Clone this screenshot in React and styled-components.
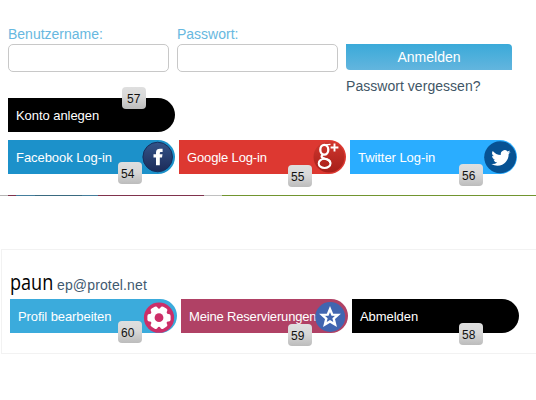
import React from "react";
import styled, { createGlobalStyle } from "styled-components";

const Global = createGlobalStyle`
  * { box-sizing: border-box; }
  body { margin: 0; background: #fff; font-family: "Liberation Sans", Arial, sans-serif; overflow: hidden; }
`;

const Page = styled.main`
  width: 536px;
  height: 400px;
  padding-top: 25px;
`;
const LoginForm = styled.form`
  display: flex;
  gap: 8px;
  height: 73px;
  padding-left: 8px;
`;
const Field = styled.label`
  display: flex;
  flex-direction: column;
  gap: 1px;
  width: 161px;
  font-size: 14px;
  line-height: 18px;
  color: #67b8e0;
`;
const Input = styled.input`
  width: 161px;
  height: 28px;
  border: 1px solid #c8c8c8;
  border-radius: 5px;
  background: #fff;
  outline: none;
`;
const Actions = styled.div`
  width: 166px;
  padding-top: 19px;
`;
const Submit = styled.button`
  display: block;
  width: 166px;
  height: 26px;
  padding: 0;
  border: 0;
  border-radius: 0 4px 0 4px;
  background: linear-gradient(#3aaad9, #63b5de);
  color: #fff;
  font: 14px/26px "Liberation Sans", Arial, sans-serif;
`;
const Forgot = styled.a`
  display: block;
  padding-top: 7px;
  font-size: 14px;
  line-height: 18px;
  letter-spacing: 0.04px;
  color: #3f5666;
  white-space: nowrap;
`;
const Row = styled.div`
  display: flex;
  gap: 4px;
  padding-left: 8px;
  margin-bottom: ${(p) => p.$after || 0}px;
`;
const Pill = styled.div`
  position: relative;
  display: flex;
  align-items: center;
  width: 167px;
  height: 34px;
  padding-left: 8px;
  border-radius: 0 17px 17px 0;
  background: ${(p) => p.$color};
  color: #fff;
  font-size: 13px;
  white-space: nowrap;
`;
const PillText = styled.span`
  letter-spacing: ${(p) => p.$spacing ?? -0.06}px;
`;
const Badge = styled.span`
  position: absolute;
  z-index: 1;
  left: ${(p) => p.$x}px;
  top: ${(p) => p.$y}px;
  width: 24px;
  height: 22px;
  padding-left: ${(p) => p.$inset || 3}px;
  border-radius: 4px;
  background: linear-gradient(#dfdfdf, #d8d8d8 45%, #bcbcbc);
  color: #111;
  font-size: 12px;
  line-height: 24px;
`;
const PillIcon = styled.svg`
  position: absolute;
  left: ${(p) => p.$x}px;
  top: ${(p) => p.$y}px;
  width: 34px;
  height: 34px;
`;
const Divider = styled.div`
  display: flex;
  height: 1px;
  margin-bottom: 53px;
`;
const Segment = styled.i`
  width: ${(p) => p.$w}px;
  background: ${(p) => p.$color};
`;
const Account = styled.section`
  width: 535px;
  height: 105px;
  margin-left: 1px;
  padding-top: 19px;
  border: 1px solid #f2f2f2;
  border-right: 0;
`;
const Identity = styled.div`
  display: flex;
  align-items: baseline;
  gap: 5px;
  height: 30px;
  padding-left: 8px;
  line-height: 26px;
`;
const Name = styled.span`
  width: 42px;
  color: #000;
  font-family: "Open Sans", sans-serif;
  font-size: 21px;
  transform: scaleX(0.86);
  transform-origin: left;
`;
const Mail = styled.span`
  color: #3f5a70;
  font-size: 14px;
  letter-spacing: 0.14px;
`;

const FacebookIcon = () => (
  <PillIcon $x={133} $y={0} viewBox="0 0 34 34">
    <defs>
      <linearGradient id="fb" x2="0" y2="1">
        <stop stopColor="#345489" /><stop offset="1" stopColor="#1c2b58" />
      </linearGradient>
    </defs>
    <circle cx="16.7" cy="17" r="14.8" fill="url(#fb)" stroke="#14305f" />
    <path d="M15 25.2V17.6H12.5V14.2H15V12.4C15 9.7 16.7 8.7 19 8.7H21.6V12H20.2C19.2 12 18.8 12.4 18.8 13.2V14.2H21.5L21 17.6H18.8V25.2Z" fill="#fff" />
  </PillIcon>
);
const GoogleIcon = () => (
  <PillIcon $x={133} $y={0} viewBox="0 0 34 34">
    <defs>
      <linearGradient id="gp" x2="0" y2="1">
        <stop stopColor="#d0372e" /><stop offset="1" stopColor="#a61e19" />
      </linearGradient>
    </defs>
    <circle cx="17" cy="17" r="15.5" fill="url(#gp)" />
    <g fill="none" stroke="#fff">
      <ellipse cx="12.3" cy="9.8" rx="4" ry="4.9" strokeWidth="2.3" />
      <path d="M13.5 4.8L18.5 4.4" strokeWidth="1.3" />
      <path d="M11 14.4C8.2 16.8 10 18 13 18.8C17 19.8 18.4 21 18.2 23.2" strokeWidth="2.2" />
      <ellipse cx="12.6" cy="23.4" rx="5.9" ry="4.6" strokeWidth="2" />
      <path d="M18.6 7.5H26.4M22.5 3.6V11.4" strokeWidth="1.9" />
    </g>
  </PillIcon>
);
const TwitterIcon = () => (
  <PillIcon $x={133} $y={0} viewBox="0 0 34 34">
    <circle cx="17.2" cy="17.2" r="16" fill="#075293" />
    <path transform="translate(8.4 8.4) scale(.8)" d="M23.95 4.57a10 10 0 0 1-2.82.77 4.96 4.96 0 0 0 2.16-2.72c-.95.55-2 .95-3.13 1.18a4.92 4.92 0 0 0-8.38 4.48C7.69 8.09 4.07 6.13 1.64 3.16a4.92 4.92 0 0 0 1.52 6.57 4.9 4.9 0 0 1-2.23-.61v.06a4.92 4.92 0 0 0 3.95 4.83 5 5 0 0 1-2.21.08 4.94 4.94 0 0 0 4.6 3.42A9.87 9.87 0 0 1 0 19.54a14 14 0 0 0 7.55 2.21c9.05 0 14-7.5 14-13.98 0-.21 0-.42-.02-.63a9.94 9.94 0 0 0 2.46-2.55z" fill="#fff" />
  </PillIcon>
);
const GearIcon = () => (
  <PillIcon $x={132} $y={1} viewBox="0 0 34 34">
    <circle cx="17" cy="17.7" r="15.1" fill="#cc2e68" />
    <g transform="translate(17 17.7)" fill="#fff">
      <circle r="9.3" />
      {[0, 60, 120, 180, 240, 300].map((a) => (
        <rect key={a} x="4" y="-3.8" width="7.6" height="7.6" rx="2" transform={`rotate(${a})`} />
      ))}
      <circle r="4.4" fill="#cc2e68" />
    </g>
  </PillIcon>
);
const StarIcon = () => (
  <PillIcon $x={132} $y={1} viewBox="0 0 34 34">
    <circle cx="17.2" cy="17" r="15" fill="#4165b0" />
    <path transform="translate(17 17.5)" d="M0-8.4L2.3-2.8L7.9-2.6L3.7 1.2L5.1 7L0 3.9L-5.1 7L-3.7 1.2L-7.9-2.6L-2.3-2.8Z" fill="none" stroke="#fff" strokeWidth="2.4" />
  </PillIcon>
);

const segments = [
  [8, "#b5b5b5"], [8, "#80334d"], [19, "#457e9c"], [47, "#3a6a80"], [16, "#457e9c"],
  [106, "#80334d"], [18, "#c0c0c0"], [314, "#71952f"],
];

export default function App() {
  return (
    <Page>
      <Global />
      <LoginForm>
        <Field>Benutzername:<Input /></Field>
        <Field>Passwort:<Input type="password" /></Field>
        <Actions>
          <Submit type="button">Anmelden</Submit>
          <Forgot>Passwort vergessen?</Forgot>
        </Actions>
      </LoginForm>
      <Row $after={8}>
        <Pill $color="#000"><PillText>Konto anlegen</PillText><Badge $x={114} $y={-11} $inset={5}>57</Badge></Pill>
      </Row>
      <Row $after={21}>
        <Pill $color="#1c91ca"><PillText>Facebook Log-in</PillText><FacebookIcon /><Badge $x={110} $y={22}>54</Badge></Pill>
        <Pill $color="#dd3831"><PillText $spacing={-0.14}>Google Log-in</PillText><GoogleIcon /><Badge $x={109} $y={25}>55</Badge></Pill>
        <Pill $color="#2aadff"><PillText>Twitter Log-in</PillText><TwitterIcon /><Badge $x={109} $y={24}>56</Badge></Pill>
      </Row>
      <Divider>{segments.map(([w, c], i) => <Segment key={i} $w={w} $color={c} />)}</Divider>
      <Account>
        <Identity><Name>paun</Name><Mail>ep@protel.net</Mail></Identity>
        <Row>
          <Pill $color="#3babdc"><PillText $spacing={-0.08}>Profil bearbeiten</PillText><GearIcon /><Badge $x={108} $y={22}>60</Badge></Pill>
          <Pill $color="#b04165"><PillText $spacing={-0.17}>Meine Reservierungen</PillText><StarIcon /><Badge $x={107} $y={25}>59</Badge></Pill>
          <Pill $color="#000"><PillText>Abmelden</PillText><Badge $x={107} $y={24}>58</Badge></Pill>
        </Row>
      </Account>
    </Page>
  );
}
